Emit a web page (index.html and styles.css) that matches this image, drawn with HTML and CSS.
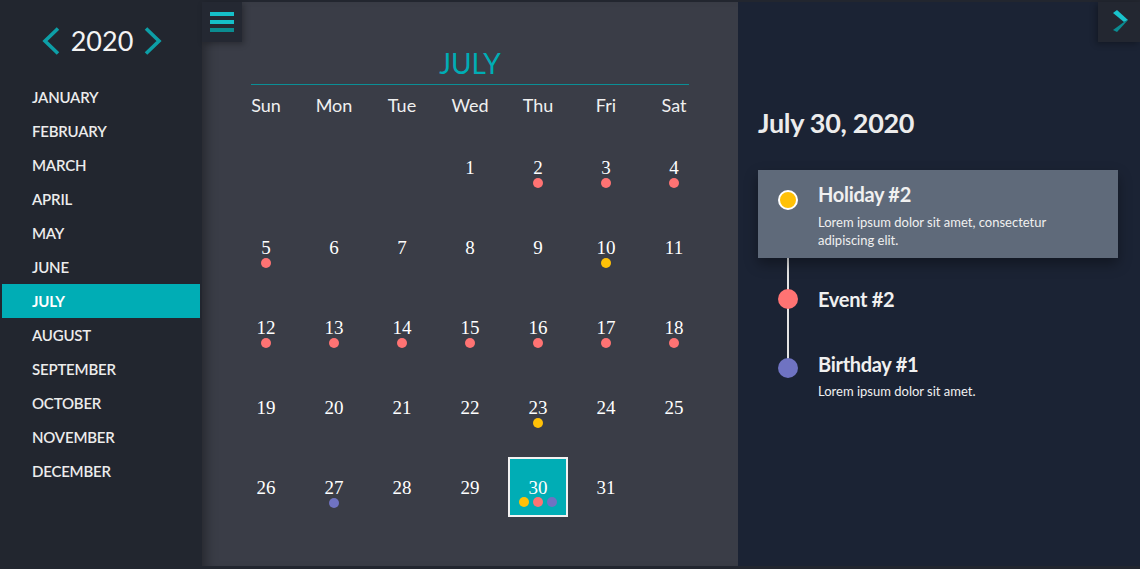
FILE: index.html
```html
<!DOCTYPE html>
<html>
<head>
<meta charset="utf-8">
<link rel="stylesheet" href="styles.css">
</head>
<body>
<div class="app">
  <aside class="sidebar">
    <div class="year">
      <svg class="chev" width="18" height="28" viewBox="0 0 18 28"><polyline points="16,1.5 3,14 16,26.5" fill="none" stroke="#0d9fa7" stroke-width="3.6"/></svg>
      <span class="year-num">2020</span>
      <svg class="chev" width="18" height="28" viewBox="0 0 18 28"><polyline points="2,1.5 15,14 2,26.5" fill="none" stroke="#0d9fa7" stroke-width="3.6"/></svg>
    </div>
    <ul class="months">
      <li>JANUARY</li><li>FEBRUARY</li><li>MARCH</li><li>APRIL</li><li>MAY</li><li>JUNE</li>
      <li class="active">JULY</li><li>AUGUST</li><li>SEPTEMBER</li><li>OCTOBER</li><li>NOVEMBER</li><li>DECEMBER</li>
    </ul>
  </aside>
  <main class="calendar">
    <button class="menu-btn"><span class="bar c1"></span><span class="bar c1"></span><span class="bar c2"></span></button>
    <div class="month-title">JULY</div>
    <div class="weekdays"><span>Sun</span><span>Mon</span><span>Tue</span><span>Wed</span><span>Thu</span><span>Fri</span><span>Sat</span></div>
    <div class="days">
      <div class="day empty"></div><div class="day empty"></div><div class="day empty"></div>
      <div class="day"><div class="box">1</div></div>
      <div class="day"><div class="box">2<span class="dots"><i class="r"></i></span></div></div>
      <div class="day"><div class="box">3<span class="dots"><i class="r"></i></span></div></div>
      <div class="day"><div class="box">4<span class="dots"><i class="r"></i></span></div></div>
      <div class="day"><div class="box">5<span class="dots"><i class="r"></i></span></div></div>
      <div class="day"><div class="box">6</div></div>
      <div class="day"><div class="box">7</div></div>
      <div class="day"><div class="box">8</div></div>
      <div class="day"><div class="box">9</div></div>
      <div class="day"><div class="box">10<span class="dots"><i class="y"></i></span></div></div>
      <div class="day"><div class="box">11</div></div>
      <div class="day"><div class="box">12<span class="dots"><i class="r"></i></span></div></div>
      <div class="day"><div class="box">13<span class="dots"><i class="r"></i></span></div></div>
      <div class="day"><div class="box">14<span class="dots"><i class="r"></i></span></div></div>
      <div class="day"><div class="box">15<span class="dots"><i class="r"></i></span></div></div>
      <div class="day"><div class="box">16<span class="dots"><i class="r"></i></span></div></div>
      <div class="day"><div class="box">17<span class="dots"><i class="r"></i></span></div></div>
      <div class="day"><div class="box">18<span class="dots"><i class="r"></i></span></div></div>
      <div class="day"><div class="box">19</div></div>
      <div class="day"><div class="box">20</div></div>
      <div class="day"><div class="box">21</div></div>
      <div class="day"><div class="box">22</div></div>
      <div class="day"><div class="box">23<span class="dots"><i class="y"></i></span></div></div>
      <div class="day"><div class="box">24</div></div>
      <div class="day"><div class="box">25</div></div>
      <div class="day"><div class="box">26</div></div>
      <div class="day"><div class="box">27<span class="dots"><i class="p"></i></span></div></div>
      <div class="day"><div class="box">28</div></div>
      <div class="day"><div class="box">29</div></div>
      <div class="day"><div class="box selected">30<span class="dots"><i class="y"></i><i class="r"></i><i class="p"></i></span></div></div>
      <div class="day"><div class="box">31</div></div>
    </div>
  </main>
  <section class="events">
    <button class="next-btn">
      <svg width="20" height="24" viewBox="0 0 20 24"><polygon points="2,3 6,0 17,10 13,12" fill="#19c3cc"/><polygon points="13,12 17,10 6,22 2,20" fill="#0b8c92"/></svg>
    </button>
    <h2 class="date-head">July 30, 2020</h2>
    <div class="timeline">
      <div class="line"></div>
      <div class="event card">
        <div class="mark"><span class="dot yellow ring"></span></div>
        <div class="content">
          <div class="ev-title">Holiday #2</div>
          <div class="ev-desc">Lorem ipsum dolor sit amet, consectetur<br>adipiscing elit.</div>
        </div>
      </div>
      <div class="event ev2">
        <div class="mark"><span class="dot red"></span></div>
        <div class="content"><div class="ev-title">Event #2</div></div>
      </div>
      <div class="event ev3">
        <div class="mark"><span class="dot purple"></span></div>
        <div class="content">
          <div class="ev-title">Birthday #1</div>
          <div class="ev-desc short">Lorem ipsum dolor sit amet.</div>
        </div>
      </div>
    </div>
  </section>
</div>
</body>
</html>
```

FILE: styles.css
```css
* { box-sizing: border-box; }
html, body { margin: 0; padding: 0; }
body {
  background: #22262f;
  font-family: "Lato", "Open Sans", sans-serif;
  color: #f0f0f0;
  width: 1140px;
  height: 569px;
  overflow: hidden;
}
.app {
  display: flex;
  height: 569px;
  padding: 2px 0 3px;
}
.sidebar {
  width: 202px;
  flex: none;
}
.year {
  display: flex;
  align-items: center;
  justify-content: center;
  gap: 11px;
  height: 78px;
  padding-left: 2px;
}
.chev { display: block; }
.year-num {
  font-size: 27px;
  line-height: 34px;
  color: #f4f4f4;
}
.months {
  list-style: none;
  margin: 0 2px;
  padding: 0;
}
.months li {
  height: 34px;
  line-height: 34px;
  padding-left: 30px;
  font-size: 15px;
  font-weight: 600;
  color: #ececec;
  letter-spacing: -0.2px;
}
.months li.active {
  background: #00adb5;
  color: #fff;
  font-weight: 700;
}
.calendar {
  position: relative;
  width: 536px;
  flex: none;
  background: #3a3d47;
  padding: 0 30px;
  box-shadow: inset 12px 0 12px -8px rgba(0,0,0,0.35);
}
.menu-btn {
  position: absolute;
  left: 0;
  top: 0;
  width: 40px;
  height: 40px;
  border: 0;
  padding: 10px 8px;
  background: #242832;
  box-shadow: 2px 2px 6px rgba(0,0,0,0.3);
  display: flex;
  flex-direction: column;
  justify-content: space-between;
}
.bar { display: block; width: 24px; height: 4px; }
.bar.c1 { background: #15bfc9; }
.bar.c2 { background: #0b8c90; }
.month-title {
  margin: 43px 19px 0 19px;
  text-align: center;
  color: #00adb5;
  font-size: 28px;
  line-height: 36px;
  padding-bottom: 3px;
  border-bottom: 1px solid #0a8f96;
}
.weekdays {
  display: grid;
  grid-template-columns: repeat(7, 68px);
  margin-top: 8px;
  text-align: center;
  font-size: 18px;
  line-height: 24px;
  color: #f0f0f0;
}
.days {
  display: grid;
  grid-template-columns: repeat(7, 68px);
  grid-auto-rows: 80px;
  margin-top: 10px;
}
.day {
  display: flex;
  align-items: center;
  justify-content: center;
}
.box {
  position: relative;
  width: 60px;
  height: 60px;
  display: flex;
  align-items: center;
  justify-content: center;
  padding-top: 2px;
  font-family: "Liberation Serif", "Times New Roman", serif;
  font-size: 19px;
  color: #fff;
}
.box.selected {
  background: #00adb5;
  border: 2px solid #f2f2f2;
}
.dots {
  position: absolute;
  left: 0;
  right: 0;
  top: 41px;
  display: flex;
  justify-content: center;
  gap: 4px;
}
.selected .dots { top: 38px; }
.dots i { display: block; width: 10px; height: 10px; border-radius: 50%; }
.dots .r { background: #ff7373; }
.dots .y { background: #ffc107; }
.dots .p { background: #6f73c2; }
.events {
  position: relative;
  flex: 1;
  background: #1b2334;
  padding: 0 22px 0 20px;
}
.next-btn {
  position: absolute;
  right: 0;
  top: 0;
  width: 42px;
  height: 40px;
  border: 0;
  background: #232731;
  box-shadow: -2px 2px 6px rgba(0,0,0,0.3);
  display: flex;
  align-items: center;
  justify-content: center;
  padding: 0 0 0 4px;
}
.date-head {
  margin: 102px 0 0;
  font-size: 27px;
  line-height: 38px;
  font-weight: 700;
  color: #ececec;
  letter-spacing: -0.3px;
}
.timeline {
  position: relative;
  margin-top: 28px;
}
.line {
  position: absolute;
  left: 29px;
  top: 88px;
  width: 2px;
  height: 112px;
  background: #e4e4e4;
}
.event {
  position: relative;
  display: flex;
}
.mark {
  width: 60px;
  flex: none;
  display: flex;
  justify-content: center;
  align-items: flex-start;
}
.dot {
  display: block;
  width: 20px;
  height: 20px;
  border-radius: 50%;
}
.dot.yellow { background: #ffc107; }
.dot.red { background: #ff7373; }
.dot.purple { background: #6f73c2; }
.dot.ring { border: 2px solid #fff; margin-top: 8px; }
.ev2 .dot { margin-top: 2px; }
.ev3 .dot { margin-top: 6px; }
.card {
  background: #5f6a7a;
  padding: 12px 0 9px;
  box-shadow: 0 6px 12px rgba(0,0,0,0.35);
}
.ev-title {
  font-size: 20px;
  line-height: 24px;
  font-weight: 700;
  color: #f0f0f0;
  letter-spacing: -0.3px;
}
.ev-desc {
  margin-top: 7px;
  font-size: 13px;
  line-height: 18px;
  color: #f0f0f0;
}
.ev-desc.short { margin-top: 6px; }
.ev2 { margin-top: 29px; }
.ev3 { margin-top: 41px; }
```
